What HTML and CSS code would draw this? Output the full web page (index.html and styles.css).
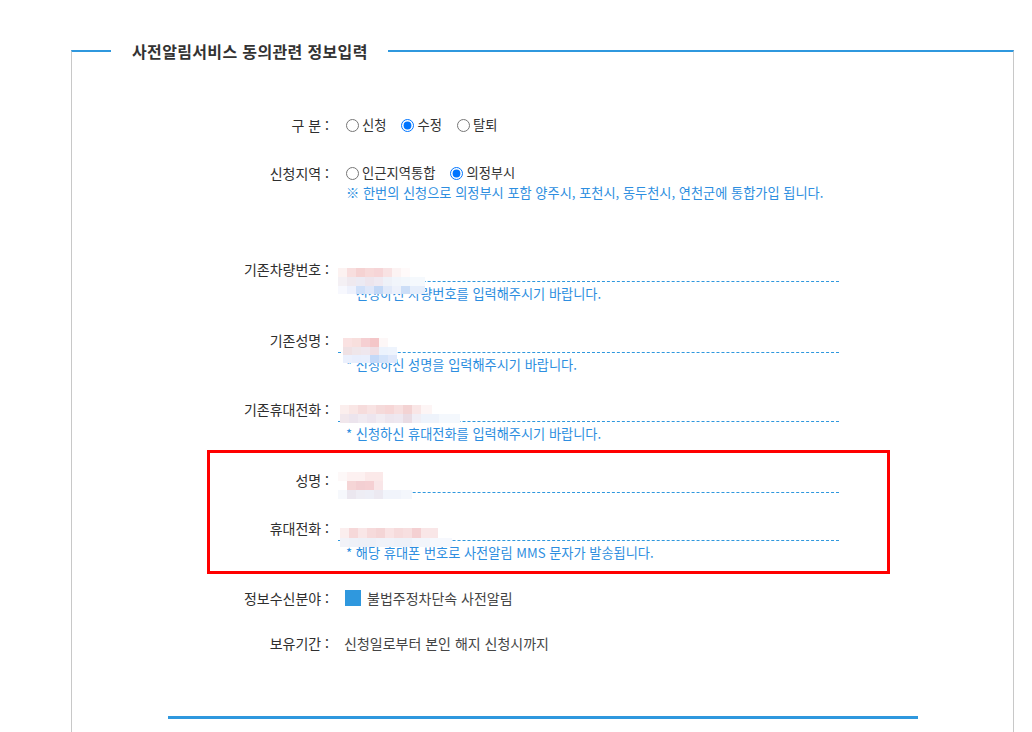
FILE: index.html
```html
<!DOCTYPE html>
<html lang="ko">
<head>
<meta charset="utf-8">
<title>사전알림서비스 동의관련 정보입력</title>
<link rel="stylesheet" href="styles.css">
</head>
<body>
<div class="page">
  <fieldset class="box">
    <legend class="box-title">사전알림서비스 동의관련 정보입력</legend>
    <div class="form">
      <div class="row row-gubun">
        <div class="label">구 분 :</div>
        <div class="value radios">
          <label class="opt"><input type="radio" name="gubun">신청</label>
          <label class="opt"><input type="radio" name="gubun" checked>수정</label>
          <label class="opt"><input type="radio" name="gubun">탈퇴</label>
        </div>
      </div>

      <div class="row row-area">
        <div class="label">신청지역 :</div>
        <div class="value">
          <div class="radios">
            <label class="opt"><input type="radio" name="area">인근지역통합</label>
            <label class="opt"><input type="radio" name="area" checked>의정부시</label>
          </div>
          <p class="notice">※ 한번의 신청으로 의정부시 포함 양주시, 포천시, 동두천시, 연천군에 통합가입 됩니다.</p>
        </div>
      </div>

      <div class="row irow row-car">
        <div class="label">기존차량번호 :</div>
        <div class="value field">
          <input class="text" type="text">
          <p class="hint">* 신청하신 차량번호를 입력해주시기 바랍니다.</p>
          <div class="mosaic mosaic-car"><i class="r1"></i><i class="r2"></i><i class="r3"></i></div>
        </div>
      </div>

      <div class="row irow row-oname">
        <div class="label">기존성명 :</div>
        <div class="value field">
          <input class="text" type="text">
          <p class="hint">* 신청하신 성명을 입력해주시기 바랍니다.</p>
          <div class="mosaic mosaic-oname"><i class="r1"></i><i class="r2"></i><i class="r3"></i></div>
        </div>
      </div>

      <div class="row irow row-ophone">
        <div class="label">기존휴대전화 :</div>
        <div class="value field">
          <input class="text" type="text">
          <p class="hint">* 신청하신 휴대전화를 입력해주시기 바랍니다.</p>
          <div class="mosaic mosaic-ophone"><i class="r1"></i><i class="r2"></i></div>
        </div>
      </div>

      <div class="highlight">
        <div class="row irow row-name">
          <div class="label">성명 :</div>
          <div class="value field">
            <input class="text" type="text">
            <div class="mosaic mosaic-name"><i class="r1"></i><i class="r2"></i><i class="r3"></i></div>
          </div>
        </div>
        <div class="row irow row-phone">
          <div class="label">휴대전화 :</div>
          <div class="value field">
            <input class="text" type="text">
            <p class="hint">* 해당 휴대폰 번호로 사전알림 MMS 문자가 발송됩니다.</p>
            <div class="mosaic mosaic-phone"><i class="r1"></i><i class="r2"></i></div>
          </div>
        </div>
      </div>

      <div class="row row-field">
        <div class="label">정보수신분야 :</div>
        <div class="value plain"><span class="check"></span>불법주정차단속 사전알림</div>
      </div>

      <div class="row row-keep">
        <div class="label">보유기간 :</div>
        <div class="value plain">신청일로부터 본인 해지 신청시까지</div>
      </div>
    </div>
    <div class="bottom-line"></div>
  </fieldset>
</div>
</body>
</html>
```

FILE: styles.css
```css
* { box-sizing: border-box; }
html, body { margin: 0; padding: 0; background: #fff; }
body {
  font-family: "Noto Sans CJK KR", "Noto Sans", sans-serif;
  color: #333;
  font-size: 13px;
}
.page {
  padding: 39px 0 0 71px;
  width: 1014px;
}
.box {
  margin: 0;
  padding: 0;
  border: 1px solid #c8c8c8;
  border-top: 2px solid #2f98de;
  border-bottom: none;
  min-width: 0;
  width: 943px;
  height: 720px;
}
.box-title {
  margin-left: 39px;
  padding: 0 20px 0 21px;
  font-size: 16px;
  line-height: 24px;
  font-weight: 700;
  color: #333;
  letter-spacing: 0.35px;
}
.form { padding-top: 52px; }
.row {
  display: grid;
  grid-template-columns: 266px 1fr;
}
.label {
  text-align: right;
  padding-right: 9px;
  font-size: 14px;
  line-height: 20px;
  color: #2e2e2e;
  white-space: nowrap;
}
.value { padding-left: 8px; line-height: 20px; }
.radios { display: flex; align-items: center; height: 20px; }
.opt {
  display: inline-flex;
  align-items: center;
  margin-right: 15px;
  font-size: 13.3px;
  color: #333;
}
.opt input {
  margin: 0 3px 0 0;
  width: 13px;
  height: 13px;
}
.notice {
  margin: 2px 0 0;
  font-size: 13.2px;
  line-height: 16px;
  color: #2d8ee0;
}
.row-area { margin-top: 28px; }
.row-car { margin-top: 55px; }
.row-oname { margin-top: 25px; }
.row-ophone { margin-top: 23px; }

.irow .label { line-height: 26px; }
.field { position: relative; padding-left: 0; }
.text {
  display: block;
  width: 501px;
  height: 26px;
  margin: 0;
  padding: 0 8px;
  border: none;
  border-bottom: 1px dashed #2f98de;
  background: transparent;
  font: inherit;
  outline: none;
}
.hint {
  margin: 4px 0 0 8px;
  font-size: 13.2px;
  line-height: 16px;
  color: #2d8ee0;
}

.highlight {
  margin: 8px 0 0 135px;
  width: 683px;
  border: 3px solid #f00;
  padding: 14px 0 10px;
}
.highlight .row { grid-template-columns: 128px 1fr; }
.row-phone { margin-top: 22px; }

.row-field { margin-top: 14px; }
.row-keep { margin-top: 25px; }
.plain { display: flex; align-items: center; font-size: 14px; color: #444; }
.check {
  width: 16px;
  height: 16px;
  background: #2f98de;
  margin: 0 6px 0 -1px;
  flex: none;
}
.row-keep .plain { margin-left: -2px; }

.bottom-line {
  width: 750px;
  height: 3px;
  background: #2f98de;
  margin: 63px auto 0;
}

/* redaction mosaics over the entered values */
.mosaic { position: absolute; left: 0; z-index: 2; }
.mosaic i { display: block; height: 9px; }
.mosaic-car { top: 12px; }
.mosaic-car .r1 { width: 72px; background: linear-gradient(90deg, #fcf2f1 0 9px, #f8dede 9px 18px, #f5d2d2 18px 27px, #f7d9d9 27px 36px, #f6d5d7 36px 45px, #f8e2e3 45px 54px, #fcf3f3 54px 63px, #fffafa 63px); }
.mosaic-car .r2 { width: 87px; background: linear-gradient(90deg, #f4f0f4 0 9px, #efe9ef 9px 18px, #eceaf3 18px 27px, #ede5ed 27px 36px, #efe9f1 36px 45px, #eef1f8 45px 54px, #f1f5fb 54px 63px, #f2f7fc 63px 72px, #f5f9fd 72px); }
.mosaic-car .r3 { width: 87px; height: 8px; background: linear-gradient(90deg, #f7f8fe 0 9px, #eef1fc 9px 18px, #d0e0f9 18px 27px, #dfe7f9 27px 36px, #c3d8f6 36px 45px, #e1e9f9 45px 54px, #edf1fb 54px 63px, #ccdef7 63px 72px, #e6eefb 72px); }

.mosaic-oname { top: 11px; left: 5px; }
.mosaic-oname .r1 { width: 45px; background: linear-gradient(90deg, #fae2e2 0 9px, #f8dfdd 9px 18px, #f5cfd2 18px 27px, #f4c6c8 27px 36px, #fdf7f7 36px); }
.mosaic-oname .r2 { width: 54px; height: 8px; background: linear-gradient(90deg, #efe1e4 0 9px, #efe6ea 9px 18px, #efe7ee 18px 27px, #efdfe5 27px 36px, #ecf3fd 36px 45px, #eef4fd 45px); }
.mosaic-oname .r3 { width: 54px; height: 8px; background: linear-gradient(90deg, #ebf0fd 0 9px, #e8eefd 9px 18px, #e9effd 18px 27px, #c4d9f8 27px 36px, #d3e3fa 36px 45px, #dfe8fb 45px); }

.mosaic-ophone { top: 9px; left: 2px; }
.mosaic-ophone .r1 { width: 92px; background: linear-gradient(90deg, #fbeeed 0 9px, #f9e6e5 9px 18px, #f6dcdc 18px 27px, #f8e3e3 27px 36px, #f5dada 36px 45px, #f6d6d6 45px 54px, #f7dfdf 54px 63px, #f3d3d3 63px 72px, #f9e6e6 72px 81px, #fdf5f5 81px); }
.mosaic-ophone .r2 { width: 120px; background: linear-gradient(90deg, #f1e7ec 0 9px, #ece4ed 9px 18px, #f0eaf1 18px 27px, #ede5ee 27px 36px, #f1ecf2 36px 45px, #ede6ee 45px 54px, #eee8f0 54px 63px, #e9dce4 63px 72px, #f0eef5 72px 81px, #eef3fb 81px 99px, #f4f8fd 99px); }

.mosaic-name { top: 5px; }
.mosaic-name .r1 { width: 45px; background: linear-gradient(90deg, #fdf8f8 0 9px, #fdf1f1 9px 27px, #fbe9e9 27px 45px); }
.mosaic-name .r2 { width: 45px; background: linear-gradient(90deg, #ffffff 0 9px, #f5d5d6 9px 18px, #f3cfd2 18px 27px, #f5d0d3 27px 36px, #f9e6e8 36px); }
.mosaic-name .r3 { width: 74px; background: linear-gradient(90deg, #f6f8fc 0 9px, #ebe7ef 9px 18px, #eeedf4 18px 27px, #edeef6 27px 36px, #ece9f1 36px 45px, #f1f4fb 45px 63px, #f4f7fc 63px); }

.mosaic-phone { top: 13px; left: 2px; }
.mosaic-phone .r1 { width: 98px; height: 10px; background: linear-gradient(90deg, #fbeeee 0 9px, #f6d8d9 9px 18px, #f9e6e7 18px 27px, #f6dadb 27px 36px, #f4d5d6 36px 45px, #f9e3e4 45px 54px, #f6dbdc 54px 63px, #f7dfe0 63px 72px, #f4d0d2 72px 81px, #f9e6e7 81px); }
.mosaic-phone .r2 { width: 112px; background: linear-gradient(90deg, #f2f2f8 0 9px, #eff1f8 9px 18px, #eef0f7 18px 36px, #f0f2f9 36px 54px, #eef1f8 54px 72px, #f2f5fb 72px 90px, #f6f8fd 90px); }
```
